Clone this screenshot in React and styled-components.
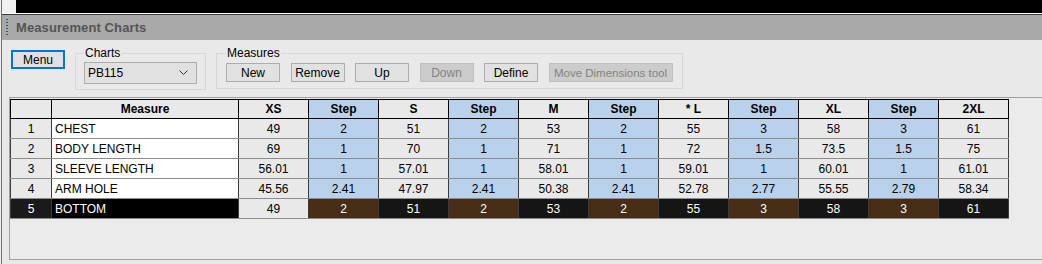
import React from 'react'
import styled, { createGlobalStyle } from 'styled-components'

//#region STYLES

  const Global = createGlobalStyle`
    html, body {
      margin: 0;
      padding: 0;
      background: #f0f0f0;
    }
    body {
      font-family: 'Liberation Sans', Arial, sans-serif;
      font-size: 12px;
      color: #000;
    }
  `

  const Window = styled.div`
    width: 1040px;
    height: 264px;
    margin-left: 1px;
    border-left: 1px solid #6e6e6e;
    background: #e9e9e9;
    display: flex;
    flex-direction: column;
    overflow: hidden;
  `

  const TopStrip = styled.div`
    display: flex;
    height: 13px;
    border-bottom: 1px solid #fff;
  `

  const Corner = styled.div`
    position: relative;
    width: 14px;
    background: #f0f0f0;

    ::after{
      content: '';
      position: absolute;
      left: 10px;
      top: 6px;
      width: 4px;
      height: 1px;
      background: #333;
    }
  `

  const Strip = styled.div`
    flex: 1;
    background: #000;
  `

  const TitleBar = styled.div`
    display: flex;
    align-items: center;
    height: 25px;
    border-top: 1px solid #3a3a3a;
    background: #a9a9a9;
  `

  const Grip = styled.div`
    width: 2px;
    height: 18px;
    margin: 0 8px 0 4px;
    background-image: linear-gradient(#2f4f9a 50%, transparent 50%);
    background-size: 2px 3px;
  `

  const Title = styled.span`
    font-size: 13px;
    font-weight: bold;
    color: #555;
    letter-spacing: 0.1px;
  `

  const Toolbar = styled.div`
    display: flex;
    align-items: flex-start;
    gap: 10px;
    padding: 6px 0 0 9px;
  `

  const MenuButton = styled.button`
    margin-top: 4px;
    width: 54px;
    height: 19px;
    padding: 0;
    border: 2px solid #0a72d2;
    background: #e1e1e1;
    font: inherit;
    color: #000;
  `

  const Group = styled.fieldset`
    margin: 0;
    padding: ${p => p.$pad};
    border: 1px solid #d7d7d7;
    display: flex;
    gap: 10.5px;
  `

  const Legend = styled.legend`
    padding: 0 1px;
    margin-left: 0;
    line-height: 14px;
    color: #000;
  `

  const Select = styled.div`
    display: flex;
    align-items: center;
    justify-content: space-between;
    box-sizing: border-box;
    width: 113px;
    height: 22px;
    padding: 0 8px 0 3px;
    border: 1px solid #adadad;
    background: #e1e1e1;
  `

  const Button = styled.button`
    box-sizing: border-box;
    width: ${p => p.$w || 54}px;
    height: 19px;
    padding: 0;
    border: 1px solid ${p => p.disabled ? '#bfbfbf' : '#adadad'};
    background: ${p => p.disabled ? '#cccccc' : '#e1e1e1'};
    color: ${p => p.disabled ? '#838383' : '#000'};
    font: inherit;
    font-size: ${p => p.$small ? '11.5px' : '12px'};
  `

  const Panel = styled.div`
    flex: 1;
    margin: 7px 0 4px 7px;
    border-top: 1px solid #a0a0a0;
    border-left: 1px solid #a0a0a0;
    border-bottom: 1px solid #a0a0a0;
    background: #ebebeb;
  `

  const Grid = styled.table`
    table-layout: fixed;
    border-collapse: collapse;
    width: 999px;
    margin-top: 1px;
    font-size: 12px;
  `

  const Head = styled.th`
    height: 18px;
    padding: 0;
    border: 1px solid #000;
    background: ${p => p.$step ? '#b9d1ea' : '#e9e9e9'};
    font-weight: bold;
    text-align: center;
  `

  const cellBg = p => {
    if (p.$sel) return p.$step ? '#472d15' : p.$dark || '#151515'
    if (p.$step) return '#b9d1ea'
    if (p.$white) return '#fff'
    return '#e9e9e9'
  }

  const Cell = styled.td`
    height: 19px;
    padding: 0 3px;
    border-top: 1px solid #8c8c8c;
    border-bottom: 1px solid #8c8c8c;
    border-left: 1px solid #3c3c3c;
    border-right: 1px solid #3c3c3c;
    background: ${cellBg};
    color: ${p => p.$sel ? '#fff' : '#000'};
    text-align: ${p => p.$left ? 'left' : 'center'};
    white-space: nowrap;
    overflow: hidden;
  `

//#endregion

const sizes = ['XS', 'Step', 'S', 'Step', 'M', 'Step', '* L', 'Step', 'XL', 'Step', '2XL']

const rows = [
  ['CHEST', '49', '2', '51', '2', '53', '2', '55', '3', '58', '3', '61'],
  ['BODY LENGTH', '69', '1', '70', '1', '71', '1', '72', '1.5', '73.5', '1.5', '75'],
  ['SLEEVE LENGTH', '56.01', '1', '57.01', '1', '58.01', '1', '59.01', '1', '60.01', '1', '61.01'],
  ['ARM HOLE', '45.56', '2.41', '47.97', '2.41', '50.38', '2.41', '52.78', '2.77', '55.55', '2.79', '58.34'],
  ['BOTTOM', '49', '2', '51', '2', '53', '2', '55', '3', '58', '3', '61'],
]

const Chevron = () => (
  <svg width="9" height="6" viewBox="0 0 9 6">
    <path d="M0.5 0.5 L4.5 4.5 L8.5 0.5" fill="none" stroke="#333" strokeWidth="1" />
  </svg>
)

const App = () => {
  return (
    <Window>
      <Global />
      <TopStrip>
        <Corner />
        <Strip />
      </TopStrip>
      <TitleBar>
        <Grip />
        <Title>Measurement Charts</Title>
      </TitleBar>
      <Toolbar>
        <MenuButton>Menu</MenuButton>
        <Group $pad="2px 8px 5px 8px">
          <Legend>Charts</Legend>
          <Select>PB115 <Chevron /></Select>
        </Group>
        <Group $pad="3px 9px 6px 9px">
          <Legend>Measures</Legend>
          <Button>New</Button>
          <Button>Remove</Button>
          <Button>Up</Button>
          <Button disabled>Down</Button>
          <Button>Define</Button>
          <Button disabled $small $w={124}>Move Dimensions tool</Button>
        </Group>
      </Toolbar>
      <Panel>
        <Grid>
          <colgroup>
            <col style={{ width: 41 }} />
            <col style={{ width: 187 }} />
            {sizes.map((_, i) => <col key={i} style={{ width: 70 }} />)}
          </colgroup>
          <thead>
            <tr>
              <Head />
              <Head>Measure</Head>
              {sizes.map((s, i) => <Head key={i} $step={s === 'Step'}>{s}</Head>)}
            </tr>
          </thead>
          <tbody>
            {rows.map((r, ri) => {
              const sel = ri === 4
              return (
                <tr key={ri}>
                  <Cell $sel={sel} $dark="#1a1a1a">{ri + 1}</Cell>
                  <Cell $left $white $sel={sel} $dark="#000">{r[0]}</Cell>
                  {r.slice(1).map((v, ci) => (
                    <Cell key={ci} $step={ci % 2 === 1} $sel={sel && ci > 0}>{v}</Cell>
                  ))}
                </tr>
              )
            })}
          </tbody>
        </Grid>
      </Panel>
    </Window>
  )
}

export default App
